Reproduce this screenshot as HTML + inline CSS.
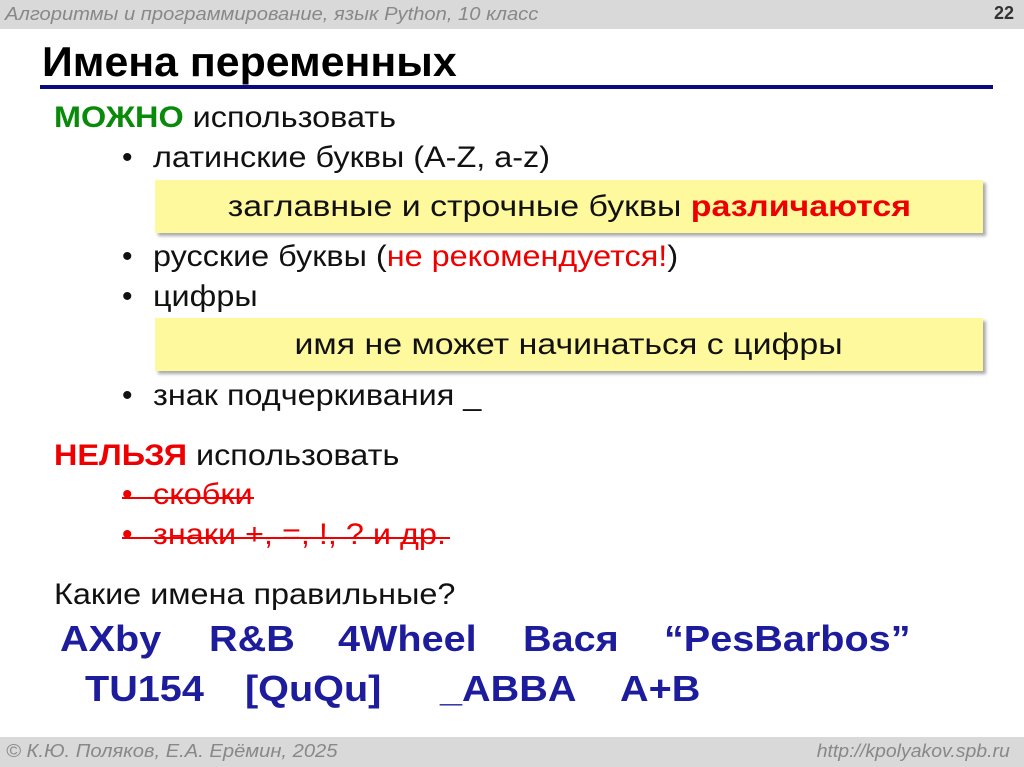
<!DOCTYPE html>
<html><head><meta charset="utf-8"><style>
body{margin:0;width:1024px;height:767px;position:relative;background:#fff;font-family:"Liberation Sans",Arial,sans-serif;overflow:hidden}
.a{position:absolute;white-space:nowrap}
.t{font-size:30px;color:#111;transform:scaleX(1.08);transform-origin:left}
.d{position:absolute;font-size:30px;color:#111}
.box{position:absolute;left:155px;width:828px;height:53px;background:#fdf99c;box-shadow:3px 3px 3px #aaa;font-size:30px;text-align:center;line-height:53px;color:#111}
.box span.in{display:inline-block;transform:scaleX(1.13)}
.b{font-size:36px;font-weight:bold;color:#1c1c9c;transform:scaleX(1.1);transform-origin:left}
</style></head><body>
<div class="a" style="left:0;top:0;width:1024px;height:29px;background:#d9d9d9"></div>
<div class="a" style="left:5px;top:4px;font-size:18px;font-style:italic;color:#888;transform:scaleX(1.12);transform-origin:left">Алгоритмы и программирование, язык Python, 10 класс</div>
<div class="a" style="right:10px;top:3px;font-size:18px;font-weight:bold;color:#333">22</div>
<div class="a" style="left:42px;top:38px;font-size:42px;font-weight:bold;color:#000;transform:scaleX(1.02);transform-origin:left">Имена переменных</div>
<div class="a" style="left:40px;top:85px;width:953px;height:4px;background:#0a0a80"></div>
<div class="a t" style="left:54px;top:101px"><b style="color:#0a8a0a">МОЖНО</b> использовать</div>
<div class="d" style="left:122px;top:141px">•</div><div class="a t" style="left:153px;top:141px">латинские буквы (A-Z, a-z)</div>
<div class="box" style="top:180px"><span class="in">заглавные и строчные буквы <b style="color:#e00">различаются</b></span></div>
<div class="d" style="left:122px;top:240px">•</div><div class="a t" style="left:153px;top:240px">русские буквы (<span style="color:#e00">не рекомендуется!</span>)</div>
<div class="d" style="left:122px;top:280px">•</div><div class="a t" style="left:153px;top:280px">цифры</div>
<div class="box" style="top:318px"><span class="in">имя не может начинаться с цифры</span></div>
<div class="d" style="left:122px;top:379px">•</div><div class="a t" style="left:153px;top:379px">знак подчеркивания _</div>
<div class="a t" style="left:54px;top:439px"><b style="color:#e00">НЕЛЬЗЯ</b> использовать</div>
<div class="d" style="left:122px;top:478px;color:#e00">•</div><div class="a t" style="left:153px;top:478px;color:#e00">скобки</div>
<div class="a" style="left:122px;top:497px;width:132px;height:2px;background:#e00"></div>
<div class="d" style="left:122px;top:518px;color:#e00">•</div><div class="a t" style="left:153px;top:518px;color:#e00">знаки +, =, !, ? и др.</div>
<div class="a" style="left:122px;top:537px;width:328px;height:2px;background:#e00"></div>
<div class="a t" style="left:54px;top:578px">Какие имена правильные?</div>
<div class="a b" style="left:60px;top:618px">AXby</div>
<div class="a b" style="left:209px;top:618px">R&amp;B</div>
<div class="a b" style="left:338px;top:618px">4Wheel</div>
<div class="a b" style="left:523px;top:618px">Вася</div>
<div class="a b" style="left:664px;top:618px">“PesBarbos”</div>
<div class="a b" style="left:85px;top:668px">TU154</div>
<div class="a b" style="left:245px;top:668px">[QuQu]</div>
<div class="a b" style="left:440px;top:668px">_ABBA</div>
<div class="a b" style="left:620px;top:668px">A+B</div>
<div class="a" style="left:0;top:737px;width:1024px;height:30px;background:#d9d9d9"></div>
<div class="a" style="left:6px;top:741px;font-size:18px;font-style:italic;color:#888;transform:scaleX(1.12);transform-origin:left">© К.Ю. Поляков, Е.А. Ерёмин, 2025</div>
<div class="a" style="right:14px;top:741px;font-size:18px;font-style:italic;color:#888;transform:scaleX(1.08);transform-origin:right">http://kpolyakov.spb.ru</div>
</body></html>
